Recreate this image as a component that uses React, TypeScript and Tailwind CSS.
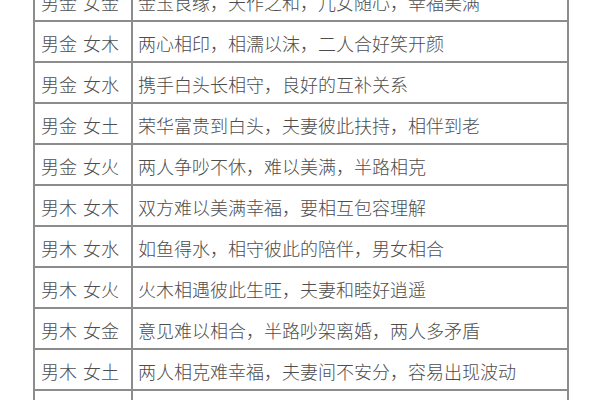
import React from "react";

interface IRow {
  man: string;
  woman: string;
  text: string;
}

const rows: IRow[] = [
  { man: "男金", woman: "女金", text: "金玉良缘，天作之和，儿女随心，幸福美满" },
  { man: "男金", woman: "女木", text: "两心相印，相濡以沫，二人合好笑开颜" },
  { man: "男金", woman: "女水", text: "携手白头长相守，良好的互补关系" },
  { man: "男金", woman: "女土", text: "荣华富贵到白头，夫妻彼此扶持，相伴到老" },
  { man: "男金", woman: "女火", text: "两人争吵不休，难以美满，半路相克" },
  { man: "男木", woman: "女木", text: "双方难以美满幸福，要相互包容理解" },
  { man: "男木", woman: "女水", text: "如鱼得水，相守彼此的陪伴，男女相合" },
  { man: "男木", woman: "女火", text: "火木相遇彼此生旺，夫妻和睦好逍遥" },
  { man: "男木", woman: "女金", text: "意见难以相合，半路吵架离婚，两人多矛盾" },
  { man: "男木", woman: "女土", text: "两人相克难幸福，夫妻间不安分，容易出现波动" },
  { man: "男水", woman: "女水", text: "夫妻恩爱，钱财积聚，荣华富贵，家庭美满幸福" },
];

const App = () => {
  return (
    <div className="w-[600px] h-[400px] overflow-hidden bg-white">
      {/* Table, top row cut off by the crop */}
      <div
        className="ml-[33px] -mt-[21px] w-[536px] border-x-2 border-t-2 border-[#8c8c8c] text-[18px] leading-none text-[#4d4d4d]"
        style={{ fontFamily: '"Noto Sans CJK SC", "Noto Sans", sans-serif' }}
      >
        {rows.map((row, index) => (
          <div key={index} className="flex h-[41px] border-b-2 border-[#8c8c8c]">
            <div className="flex w-[98px] shrink-0 items-center gap-[6px] border-r-2 border-[#8c8c8c] pl-[6px] pt-[2px] font-light">
              <span>{row.man}</span>
              <span>{row.woman}</span>
            </div>
            <div className="flex items-center pl-[5px] pt-[2px] font-light whitespace-nowrap">
              {row.text}
            </div>
          </div>
        ))}
      </div>
    </div>
  );
};

export default App;
